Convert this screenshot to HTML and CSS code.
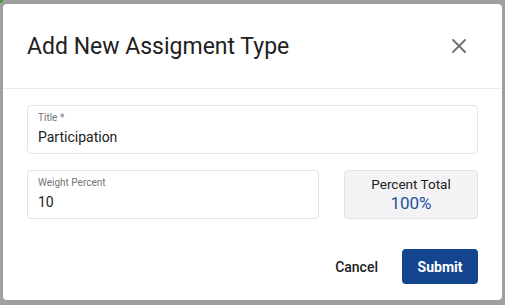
FILE: index.html
```html
<!DOCTYPE html>
<html lang="en">
<head>
    <meta charset="UTF-8">
    <meta name="viewport" content="width=device-width, initial-scale=1.0">
    <title>Add New Assigment Type</title>
    <link rel="stylesheet" href="styles.css">
</head>
<body>
    <div class="backdrop">
        <span class="status-dot"></span>
        <div class="modal">
            <div class="modal-header">
                <h2>Add New Assigment Type</h2>
                <button class="close" aria-label="Close">
                    <svg width="14" height="14" viewBox="0 0 14 14">
                        <path d="M1 1L13 13M13 1L1 13" stroke="#6b6b6b" stroke-width="1.8" stroke-linecap="square"/>
                    </svg>
                </button>
            </div>
            <div class="modal-body">
                <div class="field">
                    <label>Title *</label>
                    <div class="value">Participation</div>
                </div>
                <div class="row">
                    <div class="field weight">
                        <label>Weight Percent</label>
                        <div class="value">10</div>
                    </div>
                    <div class="total">
                        <div class="total-label">Percent Total</div>
                        <div class="total-value">100%</div>
                    </div>
                </div>
            </div>
            <div class="modal-footer">
                <button class="cancel">Cancel</button>
                <button class="submit">Submit</button>
            </div>
        </div>
    </div>
</body>
</html>
```

FILE: styles.css
```css
:root {
    --primary-color: #13468f;
    --text-color: #212121;
    --muted-color: #757575;
    --border-color: #e3e3e3;
}

body {
    margin: 0;
    font-family: Roboto, 'Liberation Sans', Arial, sans-serif;
    color: var(--text-color);
    background: #a0a0a0;
}

.backdrop {
    position: relative;
    width: 505px;
    height: 305px;
    padding: 4px 3px 0;
    box-sizing: border-box;
}

.status-dot {
    position: absolute;
    top: -3px;
    left: -3px;
    width: 6px;
    height: 6px;
    border-radius: 50%;
    background: #3f9a3c;
}

.modal {
    width: 499px;
    height: 296px;
    background: white;
    border-radius: 4px;
    display: flex;
    flex-direction: column;
}

.modal-header {
    height: 84px;
    padding: 0 24px;
    display: flex;
    align-items: center;
    justify-content: space-between;
    border-bottom: 1px solid #ececec;
}

.modal-header h2 {
    margin: 0;
    font-size: 23px;
    font-weight: 400;
}

.close {
    border: none;
    background: none;
    padding: 0;
    margin-right: 12px;
    width: 14px;
    height: 14px;
    display: flex;
    cursor: pointer;
}

.modal-body {
    padding: 16px 24px 0;
    display: flex;
    flex-direction: column;
    gap: 16px;
}

.field {
    height: 49px;
    box-sizing: border-box;
    border: 1px solid var(--border-color);
    border-radius: 4px;
    padding: 6px 10px 0;
}

.field label {
    display: block;
    font-size: 10px;
    line-height: 12px;
    color: var(--muted-color);
}

.field .value {
    font-size: 14px;
    line-height: 20px;
    margin-top: 3px;
}

.row {
    display: flex;
    gap: 25px;
}

.weight {
    flex: 1;
}

.total {
    width: 134px;
    height: 49px;
    box-sizing: border-box;
    border: 1px solid var(--border-color);
    border-radius: 4px;
    background: #f3f3f6;
    display: flex;
    flex-direction: column;
    align-items: center;
    justify-content: center;
}

.total-label {
    font-size: 13.5px;
    line-height: 17px;
}

.total-value {
    font-size: 17px;
    line-height: 21px;
    color: #1f4f9a;
}

.modal-footer {
    margin-top: auto;
    padding: 0 24px 16px;
    display: flex;
    justify-content: flex-end;
    align-items: center;
    gap: 24px;
}

button {
    font-family: inherit;
    font-size: 14px;
    cursor: pointer;
}

.cancel {
    border: none;
    background: none;
    padding: 0;
    color: var(--text-color);
    font-weight: 500;
}

.submit {
    width: 76px;
    height: 35px;
    border: none;
    border-radius: 4px;
    background: var(--primary-color);
    color: white;
    font-weight: 700;
}
```
